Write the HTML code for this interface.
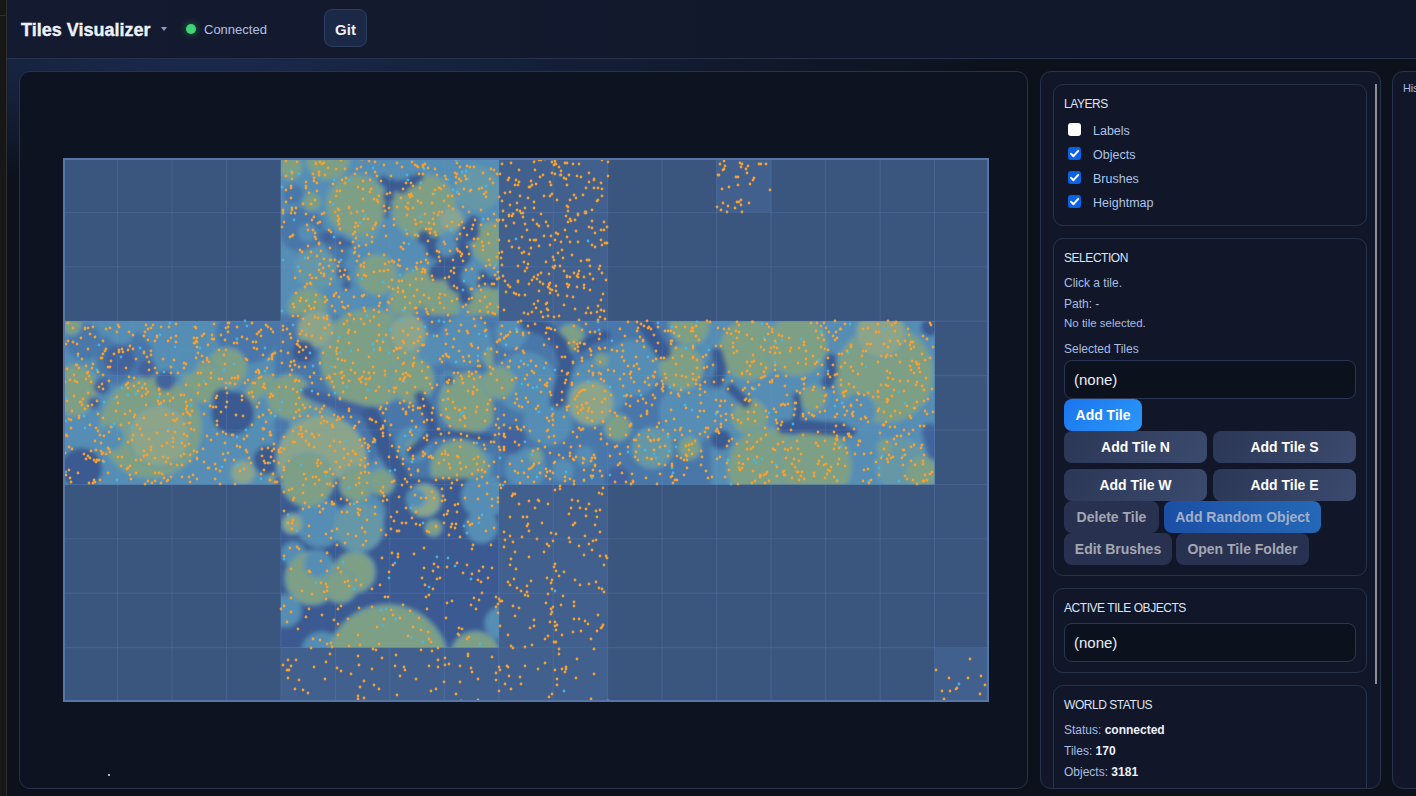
<!DOCTYPE html><html><head><meta charset="utf-8"><style>
*{box-sizing:border-box;margin:0;padding:0}
html,body{width:1416px;height:796px;overflow:hidden}
body{font-family:"Liberation Sans",sans-serif;background:#0c111c;position:relative}
.strip{position:absolute;left:0;top:0;width:7px;height:796px;background:#171717;border-right:1px solid #2e2e2e}
.strip:after{content:"";position:absolute;left:0;top:15px;width:6px;height:1px;background:#2e2e2e}
.bgglow{position:absolute;left:7px;top:0;width:1409px;height:796px;background:radial-gradient(ellipse 800px 120px at 200px 60px,#1a2a4c 0%,rgba(26,42,76,0) 100%)}
.header{position:absolute;left:7px;top:0;width:1409px;height:59px;background:linear-gradient(90deg,#141a2f,#11172a);border-bottom:1px solid #27314a}
.title{position:absolute;left:14px;top:20px;font-size:18px;font-weight:bold;color:#eef0fa;letter-spacing:0px;-webkit-text-stroke:0.35px #eef0fa}
.caret{position:absolute;left:154px;top:27px;width:0;height:0;border-left:3px solid transparent;border-right:3px solid transparent;border-top:4px solid #8d9ad0}
.dot{position:absolute;left:179px;top:24px;width:10px;height:10px;border-radius:50%;background:#3fd574;box-shadow:0 0 7px 1px rgba(63,213,116,.35)}
.conn{position:absolute;left:197px;top:21.5px;font-size:13px;color:#b4c0e4}
.git{position:absolute;left:317px;top:9px;width:43px;height:38px;border-radius:8px;background:#1b2846;border:1px solid #2d3d5f;color:#eef0fa;font-weight:bold;font-size:15px;text-align:center;line-height:39px}
.panel{position:absolute;border:1px solid #27324b;border-radius:11px}
.mapp{left:19px;top:71px;width:1009px;height:718px;background:#0d1321}
.rp{left:1040px;top:71px;width:341px;height:718px;background:#111728}
.hp{left:1392px;top:71px;width:60px;height:718px;background:#111728}
.card{position:absolute;left:1053px;width:314px;border:1px solid #27324b;border-radius:10px;background:#111728}
.h{position:absolute;left:10px;font-size:12px;color:#dde4f4;letter-spacing:-0.45px}
.t{position:absolute;left:10px;font-size:12px;color:#a9bde4}
.cb{position:absolute;left:14px;width:13px;height:13px;border-radius:3px;background:#0b62e4}
.cb.off{background:#fff}
.cbl{position:absolute;left:39px;font-size:12.5px;color:#aec3ea}
.inp{position:absolute;left:10px;width:292px;height:39px;border:1px solid #283554;border-radius:8px;background:#0c111e;color:#eaeef6;font-size:15px;padding-left:9px;line-height:37px}
.btn{position:absolute;height:32px;border-radius:8px;font-weight:bold;font-size:14px;color:#fff;text-align:center;line-height:33px}
.b1{background:linear-gradient(135deg,#1b74ee,#2b98f9)}
.b2{background:linear-gradient(120deg,#2c3756,#3b4a6e)}
.b3{background:#283250;color:#a3a6b2}
.b4{background:linear-gradient(90deg,#1b4fa6,#2468b6);color:#a1afc8}
.sb{position:absolute;left:1374.5px;top:84px;width:2px;height:600px;background:#8f8f8f}
</style></head><body><div class="strip"></div><div class="bgglow"></div><div class="header"><div class="title">Tiles Visualizer</div><div class="caret"></div><div class="dot"></div><div class="conn">Connected</div><div class="git">Git</div></div><div class="panel mapp"></div><svg width="926" height="544" viewBox="0 0 926 544" style="position:absolute;left:63px;top:158px;display:block"><defs><filter id="bl" x="-20%" y="-20%" width="140%" height="140%"><feGaussianBlur stdDeviation="2"/></filter><clipPath id="hc"><rect x="217.9" y="0.0" width="217.9" height="163.2" fill="#000"/><rect x="0.0" y="163.2" width="871.5" height="163.2" fill="#000"/><rect x="217.9" y="326.4" width="217.9" height="163.2" fill="#000"/></clipPath></defs><rect x="0" y="0" width="926" height="544" fill="#3b567e"/><rect x="435.8" y="0.0" width="108.9" height="163.2" fill="#41608e"/><rect x="653.6" y="0.0" width="54.5" height="54.4" fill="#41608e"/><rect x="435.8" y="326.4" width="108.9" height="163.2" fill="#41608e"/><rect x="217.9" y="489.6" width="326.8" height="54.4" fill="#41608e"/><rect x="871.5" y="489.6" width="54.5" height="54.4" fill="#41608e"/><rect x="217.9" y="0.0" width="217.9" height="163.2" fill="#5189b2"/><rect x="0.0" y="163.2" width="871.5" height="163.2" fill="#5189b2"/><rect x="217.9" y="326.4" width="217.9" height="163.2" fill="#5189b2"/><g clip-path="url(#hc)"><g filter="url(#bl)"><rect x="212.0" y="-6.0" width="229.9" height="175.2" fill="#548db4"/><circle cx="238.5" cy="71.6" r="22.5" fill="#4a77a9"/><circle cx="273.3" cy="96.2" r="12.3" fill="#4a77a9"/><circle cx="230.3" cy="36.8" r="10.2" fill="#4a77a9"/><circle cx="414.5" cy="30.7" r="22.5" fill="#6697a6" stroke="#5d97bb" stroke-opacity="0.55" stroke-width="2.5"/><circle cx="252.8" cy="110.5" r="20.5" fill="#6697a6" stroke="#5d97bb" stroke-opacity="0.55" stroke-width="2.5"/><circle cx="299.9" cy="69.6" r="16.4" fill="#6697a6" stroke="#5d97bb" stroke-opacity="0.55" stroke-width="2.5"/><circle cx="227.2" cy="9.2" r="12.3" fill="#7d9f86" stroke="#5d97bb" stroke-opacity="0.55" stroke-width="2.5"/><circle cx="265.1" cy="0.0" r="22.5" fill="#7d9f86" stroke="#5d97bb" stroke-opacity="0.55" stroke-width="2.5"/><circle cx="293.7" cy="47.1" r="30.7" fill="#7d9f86" stroke="#5d97bb" stroke-opacity="0.55" stroke-width="2.5"/><circle cx="248.7" cy="44.0" r="9.2" fill="#7d9f86" stroke="#5d97bb" stroke-opacity="0.55" stroke-width="2.5"/><circle cx="361.3" cy="49.1" r="32.8" fill="#7d9f86" stroke="#5d97bb" stroke-opacity="0.55" stroke-width="2.5"/><circle cx="430.9" cy="86.0" r="22.5" fill="#7d9f86" stroke="#5d97bb" stroke-opacity="0.55" stroke-width="2.5"/><circle cx="244.6" cy="149.4" r="19.4" fill="#7d9f86" stroke="#5d97bb" stroke-opacity="0.55" stroke-width="2.5"/><circle cx="314.2" cy="116.7" r="20.5" fill="#7d9f86" stroke="#5d97bb" stroke-opacity="0.55" stroke-width="2.5"/><circle cx="361.3" cy="145.3" r="35.8" fill="#7d9f86" stroke="#5d97bb" stroke-opacity="0.55" stroke-width="2.5"/><circle cx="424.8" cy="149.4" r="20.5" fill="#7d9f86" stroke="#5d97bb" stroke-opacity="0.55" stroke-width="2.5"/><circle cx="387.9" cy="61.4" r="12.3" fill="#8ca58a" stroke="#5d97bb" stroke-opacity="0.55" stroke-width="2.5"/><circle cx="320.4" cy="22.5" r="5.1" fill="#3b5a92"/><circle cx="328.5" cy="27.6" r="7.2" fill="#3b5a92"/><circle cx="338.8" cy="28.7" r="7.2" fill="#3b5a92"/><circle cx="349.0" cy="23.5" r="6.1" fill="#3b5a92"/><circle cx="356.2" cy="19.4" r="4.1" fill="#3b5a92"/><circle cx="325.5" cy="38.9" r="5.7" fill="#3b5a92"/><circle cx="324.4" cy="49.1" r="4.5" fill="#3b5a92"/><circle cx="323.4" cy="57.3" r="2.9" fill="#3b5a92"/><circle cx="361.3" cy="79.8" r="7.2" fill="#3b5a92"/><circle cx="373.6" cy="90.1" r="11.3" fill="#3b5a92"/><circle cx="392.0" cy="96.2" r="16.4" fill="#3b5a92"/><circle cx="406.3" cy="73.7" r="10.2" fill="#3b5a92"/><circle cx="410.4" cy="63.5" r="6.1" fill="#3b5a92"/><circle cx="396.1" cy="122.8" r="12.3" fill="#3b5a92"/><circle cx="402.2" cy="139.2" r="7.2" fill="#3b5a92"/><circle cx="418.6" cy="120.8" r="8.2" fill="#3b5a92"/><circle cx="430.9" cy="124.9" r="6.1" fill="#3b5a92"/><circle cx="373.6" cy="114.6" r="8.2" fill="#3b5a92"/><circle cx="383.8" cy="110.5" r="12.3" fill="#3b5a92"/><circle cx="265.1" cy="79.8" r="7.2" fill="#42649c"/><circle cx="277.4" cy="83.9" r="6.1" fill="#42649c"/><circle cx="285.6" cy="86.0" r="4.1" fill="#42649c"/><circle cx="279.4" cy="114.6" r="6.1" fill="#42649c"/><circle cx="283.5" cy="126.9" r="5.1" fill="#42649c"/><circle cx="359.2" cy="157.6" r="8.2" fill="#3b5a92"/><circle cx="383.8" cy="88.0" r="9.8" fill="#548db4" stroke="#5d97bb" stroke-opacity="0.55" stroke-width="2.5"/><circle cx="407.4" cy="118.7" r="8.6" fill="#548db4" stroke="#5d97bb" stroke-opacity="0.55" stroke-width="2.5"/><circle cx="359.2" cy="157.6" r="6.6" fill="#548db4" stroke="#5d97bb" stroke-opacity="0.55" stroke-width="2.5"/><circle cx="244.6" cy="74.7" r="8.2" fill="#548db4" stroke="#5d97bb" stroke-opacity="0.55" stroke-width="2.5"/><rect x="-6.0" y="157.0" width="229.9" height="175.2" fill="#548db4"/><circle cx="20.5" cy="183.5" r="18.4" fill="#4a77a9"/><circle cx="61.4" cy="199.8" r="28.7" fill="#4a77a9"/><circle cx="184.2" cy="175.3" r="30.7" fill="#4a77a9"/><circle cx="124.9" cy="183.5" r="22.5" fill="#548db4"/><circle cx="10.2" cy="277.6" r="14.3" fill="#548db4"/><circle cx="143.3" cy="306.3" r="20.5" fill="#548db4"/><circle cx="8.2" cy="167.1" r="10.2" fill="#7d9f86" stroke="#5d97bb" stroke-opacity="0.55" stroke-width="2.5"/><circle cx="10.2" cy="232.6" r="25.6" fill="#7d9f86" stroke="#5d97bb" stroke-opacity="0.55" stroke-width="2.5"/><circle cx="163.8" cy="210.1" r="20.5" fill="#7d9f86" stroke="#5d97bb" stroke-opacity="0.55" stroke-width="2.5"/><circle cx="139.2" cy="224.4" r="20.5" fill="#7d9f86" stroke="#5d97bb" stroke-opacity="0.55" stroke-width="2.5"/><circle cx="88.0" cy="269.4" r="51.2" fill="#7d9f86" stroke="#5d97bb" stroke-opacity="0.55" stroke-width="2.5"/><circle cx="204.7" cy="238.7" r="22.5" fill="#7d9f86" stroke="#5d97bb" stroke-opacity="0.55" stroke-width="2.5"/><circle cx="214.9" cy="318.6" r="10.2" fill="#7d9f86" stroke="#5d97bb" stroke-opacity="0.55" stroke-width="2.5"/><circle cx="96.2" cy="277.6" r="30.7" fill="#8ca58a" stroke="#5d97bb" stroke-opacity="0.55" stroke-width="2.5"/><circle cx="180.1" cy="314.5" r="12.3" fill="#8ca58a" stroke="#5d97bb" stroke-opacity="0.55" stroke-width="2.5"/><circle cx="56.7" cy="202.1" r="15.4" fill="#42649c"/><circle cx="38.9" cy="228.5" r="8.2" fill="#42649c"/><circle cx="30.7" cy="244.9" r="6.1" fill="#42649c"/><circle cx="83.9" cy="211.1" r="9.2" fill="#42649c"/><circle cx="102.4" cy="222.4" r="10.2" fill="#42649c"/><circle cx="169.9" cy="255.1" r="21.5" fill="#3b5a92"/><circle cx="159.7" cy="240.8" r="10.2" fill="#3b5a92"/><circle cx="18.4" cy="310.4" r="20.5" fill="#3b5a92"/><circle cx="204.7" cy="302.2" r="14.3" fill="#3b5a92"/><circle cx="57.7" cy="172.2" r="13.3" fill="#548db4" stroke="#5d97bb" stroke-opacity="0.55" stroke-width="2.5"/><circle cx="122.8" cy="203.9" r="12.3" fill="#548db4" stroke="#5d97bb" stroke-opacity="0.55" stroke-width="2.5"/><circle cx="202.7" cy="249.0" r="11.3" fill="#548db4" stroke="#5d97bb" stroke-opacity="0.55" stroke-width="2.5"/><circle cx="48.1" cy="279.7" r="12.7" fill="#548db4" stroke="#5d97bb" stroke-opacity="0.55" stroke-width="2.5"/><rect x="212.0" y="157.0" width="229.9" height="175.2" fill="#4a77a9"/><circle cx="238.5" cy="208.0" r="16.4" fill="#4a77a9"/><circle cx="369.5" cy="191.7" r="16.4" fill="#548db4"/><circle cx="402.2" cy="183.5" r="26.6" fill="#548db4"/><circle cx="385.9" cy="222.4" r="9.2" fill="#548db4"/><circle cx="279.4" cy="298.1" r="8.2" fill="#548db4"/><circle cx="318.3" cy="314.5" r="14.3" fill="#548db4"/><circle cx="351.1" cy="285.8" r="18.4" fill="#548db4"/><circle cx="420.7" cy="306.3" r="12.3" fill="#548db4"/><circle cx="248.7" cy="261.3" r="22.5" fill="#6697a6" stroke="#5d97bb" stroke-opacity="0.55" stroke-width="2.5"/><circle cx="306.0" cy="199.8" r="49.1" fill="#7d9f86" stroke="#5d97bb" stroke-opacity="0.55" stroke-width="2.5"/><circle cx="349.0" cy="222.4" r="22.5" fill="#7d9f86" stroke="#5d97bb" stroke-opacity="0.55" stroke-width="2.5"/><circle cx="226.2" cy="238.7" r="22.5" fill="#7d9f86" stroke="#5d97bb" stroke-opacity="0.55" stroke-width="2.5"/><circle cx="406.3" cy="244.9" r="30.7" fill="#7d9f86" stroke="#5d97bb" stroke-opacity="0.55" stroke-width="2.5"/><circle cx="432.9" cy="199.8" r="12.3" fill="#7d9f86" stroke="#5d97bb" stroke-opacity="0.55" stroke-width="2.5"/><circle cx="351.1" cy="289.9" r="8.2" fill="#7d9f86" stroke="#5d97bb" stroke-opacity="0.55" stroke-width="2.5"/><circle cx="396.1" cy="310.4" r="28.7" fill="#7d9f86" stroke="#5d97bb" stroke-opacity="0.55" stroke-width="2.5"/><circle cx="344.9" cy="175.3" r="18.4" fill="#8ca58a" stroke="#5d97bb" stroke-opacity="0.55" stroke-width="2.5"/><circle cx="252.8" cy="171.2" r="18.4" fill="#8ca58a" stroke="#5d97bb" stroke-opacity="0.55" stroke-width="2.5"/><circle cx="258.9" cy="302.2" r="45.0" fill="#8ca58a" stroke="#5d97bb" stroke-opacity="0.55" stroke-width="2.5"/><circle cx="240.5" cy="193.7" r="11.3" fill="#3b5a92"/><circle cx="385.9" cy="222.4" r="4.5" fill="#3b5a92"/><circle cx="244.6" cy="234.6" r="6.1" fill="#42649c"/><circle cx="248.7" cy="236.4" r="6.1" fill="#42649c"/><circle cx="252.8" cy="238.1" r="6.1" fill="#42649c"/><circle cx="256.9" cy="239.8" r="6.1" fill="#42649c"/><circle cx="261.0" cy="241.5" r="6.1" fill="#42649c"/><circle cx="265.1" cy="243.2" r="6.1" fill="#42649c"/><circle cx="269.2" cy="244.9" r="6.1" fill="#42649c"/><circle cx="273.6" cy="246.1" r="6.1" fill="#42649c"/><circle cx="278.0" cy="247.2" r="6.1" fill="#42649c"/><circle cx="282.3" cy="248.4" r="6.1" fill="#42649c"/><circle cx="286.7" cy="249.6" r="6.1" fill="#42649c"/><circle cx="291.1" cy="250.7" r="6.1" fill="#42649c"/><circle cx="295.5" cy="251.9" r="6.1" fill="#42649c"/><circle cx="299.9" cy="253.1" r="6.1" fill="#42649c"/><circle cx="308.1" cy="257.2" r="9.2" fill="#3b5a92"/><circle cx="312.2" cy="265.4" r="9.2" fill="#3b5a92"/><circle cx="316.3" cy="273.5" r="9.2" fill="#3b5a92"/><circle cx="319.3" cy="281.7" r="9.2" fill="#3b5a92"/><circle cx="322.4" cy="289.9" r="9.2" fill="#3b5a92"/><circle cx="326.5" cy="298.1" r="9.2" fill="#3b5a92"/><circle cx="330.6" cy="306.3" r="9.2" fill="#3b5a92"/><circle cx="334.0" cy="313.1" r="9.2" fill="#3b5a92"/><circle cx="337.4" cy="319.9" r="9.2" fill="#3b5a92"/><circle cx="340.8" cy="326.8" r="9.2" fill="#3b5a92"/><circle cx="357.0" cy="238.9" r="5.7" fill="#3b5a92"/><circle cx="359.3" cy="242.9" r="5.7" fill="#3b5a92"/><circle cx="361.6" cy="246.8" r="5.7" fill="#3b5a92"/><circle cx="363.9" cy="250.8" r="5.7" fill="#3b5a92"/><circle cx="366.2" cy="254.7" r="5.7" fill="#3b5a92"/><circle cx="367.2" cy="258.9" r="5.7" fill="#3b5a92"/><circle cx="368.2" cy="263.1" r="5.7" fill="#3b5a92"/><circle cx="369.1" cy="267.3" r="5.7" fill="#3b5a92"/><circle cx="370.1" cy="271.5" r="5.7" fill="#3b5a92"/><circle cx="367.2" cy="275.6" r="5.7" fill="#3b5a92"/><circle cx="364.2" cy="279.7" r="5.7" fill="#3b5a92"/><circle cx="361.3" cy="283.8" r="5.7" fill="#3b5a92"/><circle cx="357.2" cy="287.2" r="5.7" fill="#3b5a92"/><circle cx="353.1" cy="290.6" r="5.7" fill="#3b5a92"/><circle cx="349.0" cy="294.0" r="5.7" fill="#3b5a92"/><circle cx="373.6" cy="275.2" r="4.1" fill="#3b5a92"/><circle cx="376.6" cy="275.3" r="4.1" fill="#3b5a92"/><circle cx="379.7" cy="275.5" r="4.1" fill="#3b5a92"/><circle cx="382.8" cy="275.6" r="4.1" fill="#3b5a92"/><circle cx="385.9" cy="275.7" r="4.1" fill="#3b5a92"/><circle cx="388.9" cy="275.9" r="4.1" fill="#3b5a92"/><circle cx="392.0" cy="276.0" r="4.1" fill="#3b5a92"/><circle cx="394.9" cy="276.3" r="4.1" fill="#3b5a92"/><circle cx="397.9" cy="276.6" r="4.1" fill="#3b5a92"/><circle cx="400.8" cy="276.9" r="4.1" fill="#3b5a92"/><circle cx="403.7" cy="277.2" r="4.1" fill="#3b5a92"/><circle cx="406.6" cy="277.5" r="4.1" fill="#3b5a92"/><circle cx="409.5" cy="277.8" r="4.1" fill="#3b5a92"/><circle cx="412.5" cy="278.0" r="4.1" fill="#3b5a92"/><circle cx="415.5" cy="278.5" r="4.1" fill="#3b5a92"/><circle cx="418.6" cy="278.9" r="4.1" fill="#3b5a92"/><circle cx="421.7" cy="279.3" r="4.1" fill="#3b5a92"/><circle cx="424.8" cy="279.7" r="4.1" fill="#3b5a92"/><circle cx="427.8" cy="280.1" r="4.1" fill="#3b5a92"/><circle cx="430.9" cy="280.5" r="4.1" fill="#3b5a92"/><circle cx="434.0" cy="280.9" r="4.1" fill="#3b5a92"/><circle cx="437.0" cy="281.3" r="4.1" fill="#3b5a92"/><rect x="430.0" y="157.0" width="229.9" height="175.2" fill="#4a77a9"/><circle cx="550.6" cy="294.0" r="14.3" fill="#4a77a9"/><circle cx="630.5" cy="314.5" r="20.5" fill="#4a77a9"/><circle cx="448.3" cy="175.3" r="16.4" fill="#548db4"/><circle cx="462.6" cy="224.4" r="30.7" fill="#548db4"/><circle cx="534.3" cy="230.6" r="30.7" fill="#548db4"/><circle cx="569.1" cy="210.1" r="28.7" fill="#548db4"/><circle cx="640.7" cy="189.6" r="18.4" fill="#548db4"/><circle cx="626.4" cy="255.1" r="30.7" fill="#548db4"/><circle cx="485.1" cy="263.3" r="24.6" fill="#548db4"/><circle cx="462.6" cy="310.4" r="20.5" fill="#548db4"/><circle cx="499.5" cy="312.4" r="11.3" fill="#548db4"/><circle cx="522.0" cy="298.1" r="10.2" fill="#548db4"/><circle cx="589.5" cy="289.9" r="20.5" fill="#6697a6" stroke="#5d97bb" stroke-opacity="0.55" stroke-width="2.5"/><circle cx="436.0" cy="224.4" r="16.4" fill="#7d9f86" stroke="#5d97bb" stroke-opacity="0.55" stroke-width="2.5"/><circle cx="507.6" cy="179.4" r="13.3" fill="#7d9f86" stroke="#5d97bb" stroke-opacity="0.55" stroke-width="2.5"/><circle cx="538.4" cy="201.9" r="7.2" fill="#7d9f86" stroke="#5d97bb" stroke-opacity="0.55" stroke-width="2.5"/><circle cx="618.2" cy="210.1" r="22.5" fill="#7d9f86" stroke="#5d97bb" stroke-opacity="0.55" stroke-width="2.5"/><circle cx="626.4" cy="167.1" r="20.5" fill="#7d9f86" stroke="#5d97bb" stroke-opacity="0.55" stroke-width="2.5"/><circle cx="554.7" cy="269.4" r="13.3" fill="#7d9f86" stroke="#5d97bb" stroke-opacity="0.55" stroke-width="2.5"/><circle cx="626.4" cy="289.9" r="11.3" fill="#7d9f86" stroke="#5d97bb" stroke-opacity="0.55" stroke-width="2.5"/><circle cx="472.8" cy="298.1" r="7.2" fill="#7d9f86" stroke="#5d97bb" stroke-opacity="0.55" stroke-width="2.5"/><circle cx="528.1" cy="244.9" r="22.5" fill="#8ca58a" stroke="#5d97bb" stroke-opacity="0.55" stroke-width="2.5"/><circle cx="654.0" cy="206.0" r="8.2" fill="#3b5a92"/><circle cx="464.7" cy="165.0" r="7.8" fill="#3b5a92"/><circle cx="470.8" cy="167.1" r="7.8" fill="#3b5a92"/><circle cx="476.9" cy="169.1" r="7.8" fill="#3b5a92"/><circle cx="483.1" cy="171.2" r="7.8" fill="#3b5a92"/><circle cx="487.9" cy="176.0" r="7.8" fill="#3b5a92"/><circle cx="492.6" cy="180.7" r="7.8" fill="#3b5a92"/><circle cx="497.4" cy="185.5" r="7.8" fill="#3b5a92"/><circle cx="499.5" cy="191.7" r="7.8" fill="#3b5a92"/><circle cx="501.5" cy="197.8" r="7.8" fill="#3b5a92"/><circle cx="503.6" cy="203.9" r="7.8" fill="#3b5a92"/><circle cx="502.2" cy="210.8" r="7.8" fill="#3b5a92"/><circle cx="500.8" cy="217.6" r="7.8" fill="#3b5a92"/><circle cx="499.5" cy="224.4" r="7.8" fill="#3b5a92"/><circle cx="497.8" cy="230.6" r="7.8" fill="#3b5a92"/><circle cx="496.0" cy="236.7" r="7.8" fill="#3b5a92"/><circle cx="494.3" cy="242.8" r="7.8" fill="#3b5a92"/><circle cx="517.9" cy="189.6" r="5.1" fill="#3b5a92"/><circle cx="521.3" cy="186.9" r="5.1" fill="#3b5a92"/><circle cx="524.7" cy="184.2" r="5.1" fill="#3b5a92"/><circle cx="528.1" cy="181.4" r="5.1" fill="#3b5a92"/><circle cx="531.7" cy="180.4" r="5.1" fill="#3b5a92"/><circle cx="535.3" cy="179.4" r="5.1" fill="#3b5a92"/><circle cx="538.9" cy="178.4" r="5.1" fill="#3b5a92"/><circle cx="542.4" cy="177.3" r="5.1" fill="#3b5a92"/><circle cx="583.4" cy="167.1" r="8.2" fill="#3b5a92"/><circle cx="587.5" cy="174.3" r="8.2" fill="#3b5a92"/><circle cx="591.6" cy="181.4" r="8.2" fill="#3b5a92"/><circle cx="595.7" cy="187.6" r="8.2" fill="#3b5a92"/><circle cx="599.8" cy="193.7" r="8.2" fill="#3b5a92"/><circle cx="448.3" cy="281.7" r="14.3" fill="#42649c"/><circle cx="554.7" cy="320.6" r="12.3" fill="#42649c"/><rect x="648.0" y="157.0" width="229.9" height="175.2" fill="#548db4"/><circle cx="813.7" cy="310.4" r="30.7" fill="#548db4"/><circle cx="834.1" cy="312.4" r="14.3" fill="#548db4"/><circle cx="838.2" cy="306.3" r="26.6" fill="#6697a6" stroke="#5d97bb" stroke-opacity="0.55" stroke-width="2.5"/><circle cx="686.8" cy="191.7" r="30.7" fill="#7d9f86" stroke="#5d97bb" stroke-opacity="0.55" stroke-width="2.5"/><circle cx="733.8" cy="187.6" r="30.7" fill="#7d9f86" stroke="#5d97bb" stroke-opacity="0.55" stroke-width="2.5"/><circle cx="686.8" cy="259.2" r="18.4" fill="#7d9f86" stroke="#5d97bb" stroke-opacity="0.55" stroke-width="2.5"/><circle cx="750.2" cy="240.8" r="13.3" fill="#7d9f86" stroke="#5d97bb" stroke-opacity="0.55" stroke-width="2.5"/><circle cx="821.9" cy="216.2" r="49.1" fill="#7d9f86" stroke="#5d97bb" stroke-opacity="0.55" stroke-width="2.5"/><circle cx="705.2" cy="310.4" r="40.9" fill="#7d9f86" stroke="#5d97bb" stroke-opacity="0.55" stroke-width="2.5"/><circle cx="752.3" cy="308.3" r="36.8" fill="#7d9f86" stroke="#5d97bb" stroke-opacity="0.55" stroke-width="2.5"/><circle cx="821.9" cy="288.9" r="8.2" fill="#7d9f86" stroke="#5d97bb" stroke-opacity="0.55" stroke-width="2.5"/><circle cx="858.7" cy="314.5" r="16.4" fill="#7d9f86" stroke="#5d97bb" stroke-opacity="0.55" stroke-width="2.5"/><circle cx="817.8" cy="175.3" r="24.6" fill="#8ca58a" stroke="#5d97bb" stroke-opacity="0.55" stroke-width="2.5"/><circle cx="654.0" cy="195.8" r="6.1" fill="#3b5a92"/><circle cx="655.4" cy="200.5" r="6.1" fill="#3b5a92"/><circle cx="656.7" cy="205.3" r="6.1" fill="#3b5a92"/><circle cx="658.1" cy="210.1" r="6.1" fill="#3b5a92"/><circle cx="656.7" cy="214.9" r="6.1" fill="#3b5a92"/><circle cx="655.4" cy="219.6" r="6.1" fill="#3b5a92"/><circle cx="654.0" cy="224.4" r="6.1" fill="#3b5a92"/><circle cx="668.3" cy="230.6" r="5.1" fill="#3b5a92"/><circle cx="671.1" cy="233.3" r="5.1" fill="#3b5a92"/><circle cx="673.8" cy="236.0" r="5.1" fill="#3b5a92"/><circle cx="676.5" cy="238.7" r="5.1" fill="#3b5a92"/><circle cx="679.6" cy="241.8" r="5.1" fill="#3b5a92"/><circle cx="682.7" cy="244.9" r="5.1" fill="#3b5a92"/><circle cx="767.6" cy="201.9" r="6.1" fill="#3b5a92"/><circle cx="768.1" cy="208.0" r="6.1" fill="#3b5a92"/><circle cx="768.6" cy="214.2" r="6.1" fill="#3b5a92"/><circle cx="766.6" cy="219.3" r="6.1" fill="#3b5a92"/><circle cx="764.5" cy="224.4" r="6.1" fill="#3b5a92"/><circle cx="733.8" cy="238.7" r="3.7" fill="#3b5a92"/><circle cx="734.2" cy="241.6" r="3.7" fill="#3b5a92"/><circle cx="734.7" cy="244.5" r="3.7" fill="#3b5a92"/><circle cx="735.1" cy="247.3" r="3.7" fill="#3b5a92"/><circle cx="735.5" cy="250.2" r="3.7" fill="#3b5a92"/><circle cx="735.9" cy="253.1" r="3.7" fill="#3b5a92"/><circle cx="735.1" cy="255.5" r="3.7" fill="#3b5a92"/><circle cx="734.2" cy="258.0" r="3.7" fill="#3b5a92"/><circle cx="733.4" cy="260.4" r="3.7" fill="#3b5a92"/><circle cx="732.6" cy="262.9" r="3.7" fill="#3b5a92"/><circle cx="731.8" cy="265.4" r="3.7" fill="#3b5a92"/><circle cx="721.6" cy="269.4" r="7.2" fill="#3b5a92"/><circle cx="726.7" cy="269.2" r="7.2" fill="#3b5a92"/><circle cx="731.8" cy="268.9" r="7.2" fill="#3b5a92"/><circle cx="736.9" cy="268.7" r="7.2" fill="#3b5a92"/><circle cx="742.0" cy="268.4" r="7.2" fill="#3b5a92"/><circle cx="747.7" cy="268.9" r="7.2" fill="#3b5a92"/><circle cx="753.3" cy="269.4" r="7.2" fill="#3b5a92"/><circle cx="758.9" cy="270.0" r="7.2" fill="#3b5a92"/><circle cx="764.5" cy="270.5" r="7.2" fill="#3b5a92"/><circle cx="770.2" cy="270.7" r="7.2" fill="#3b5a92"/><circle cx="775.8" cy="271.0" r="7.2" fill="#3b5a92"/><circle cx="781.4" cy="271.2" r="7.2" fill="#3b5a92"/><circle cx="787.1" cy="271.5" r="7.2" fill="#3b5a92"/><circle cx="658.1" cy="281.7" r="10.2" fill="#3b5a92"/><circle cx="866.9" cy="169.1" r="9.2" fill="#3b5a92"/><circle cx="866.9" cy="273.5" r="8.2" fill="#42649c"/><circle cx="868.6" cy="280.4" r="8.2" fill="#42649c"/><circle cx="870.3" cy="287.2" r="8.2" fill="#42649c"/><circle cx="872.0" cy="294.0" r="8.2" fill="#42649c"/><circle cx="795.2" cy="253.1" r="17.4" fill="#548db4" stroke="#5d97bb" stroke-opacity="0.55" stroke-width="2.5"/><rect x="212.0" y="320.0" width="229.9" height="175.2" fill="#3b5a92"/><circle cx="256.9" cy="364.9" r="24.6" fill="#548db4"/><circle cx="304.0" cy="354.7" r="18.4" fill="#548db4"/><circle cx="420.7" cy="338.3" r="22.5" fill="#548db4"/><circle cx="418.6" cy="369.0" r="16.4" fill="#548db4"/><circle cx="230.3" cy="395.6" r="12.3" fill="#548db4"/><circle cx="222.1" cy="452.9" r="16.4" fill="#548db4"/><circle cx="258.9" cy="493.9" r="20.5" fill="#548db4"/><circle cx="438.1" cy="465.2" r="16.4" fill="#548db4"/><circle cx="295.8" cy="369.0" r="24.6" fill="#6697a6" stroke="#5d97bb" stroke-opacity="0.55" stroke-width="2.5"/><circle cx="244.6" cy="321.9" r="26.6" fill="#7d9f86" stroke="#5d97bb" stroke-opacity="0.55" stroke-width="2.5"/><circle cx="293.7" cy="326.0" r="17.4" fill="#7d9f86" stroke="#5d97bb" stroke-opacity="0.55" stroke-width="2.5"/><circle cx="318.3" cy="324.0" r="13.3" fill="#7d9f86" stroke="#5d97bb" stroke-opacity="0.55" stroke-width="2.5"/><circle cx="370.5" cy="370.0" r="8.2" fill="#7d9f86" stroke="#5d97bb" stroke-opacity="0.55" stroke-width="2.5"/><circle cx="248.7" cy="420.2" r="26.6" fill="#7d9f86" stroke="#5d97bb" stroke-opacity="0.55" stroke-width="2.5"/><circle cx="291.7" cy="414.0" r="20.5" fill="#7d9f86" stroke="#5d97bb" stroke-opacity="0.55" stroke-width="2.5"/><circle cx="277.4" cy="428.4" r="16.4" fill="#7d9f86" stroke="#5d97bb" stroke-opacity="0.55" stroke-width="2.5"/><circle cx="324.4" cy="508.2" r="61.4" fill="#7d9f86" stroke="#5d97bb" stroke-opacity="0.55" stroke-width="2.5"/><circle cx="412.5" cy="498.0" r="24.6" fill="#7d9f86" stroke="#5d97bb" stroke-opacity="0.55" stroke-width="2.5"/><circle cx="229.3" cy="365.9" r="10.2" fill="#8ca58a" stroke="#5d97bb" stroke-opacity="0.55" stroke-width="2.5"/><circle cx="361.3" cy="342.4" r="16.4" fill="#8ca58a" stroke="#5d97bb" stroke-opacity="0.55" stroke-width="2.5"/><circle cx="353.1" cy="340.3" r="9.2" fill="#548db4" stroke="#5d97bb" stroke-opacity="0.55" stroke-width="2.5"/><circle cx="254.8" cy="405.8" r="13.3" fill="#548db4" stroke="#5d97bb" stroke-opacity="0.55" stroke-width="2.5"/></g></g><path d="M219 29h0M228 13h0M270 46h0M271 22h0M236 16h0M256 107h0M235 109h0M242 100h0M271 79h0M220 102h0M231 62h0M261 158h0M219 153h0M245 142h0M310 10h0M286 22h0M297 65h0M302 58h0M278 102h0M320 124h0M304 158h0M299 121h0M344 17h0M372 36h0M358 25h0M345 22h0M361 11h0M357 59h0M354 76h0M343 72h0M346 86h0M340 152h0M376 163h0M337 117h0M341 152h0M339 162h0M350 113h0M423 28h0M403 13h0M390 32h0M393 2h0M394 34h0M405 21h0M385 22h0M399 14h0M388 58h0M432 108h0M420 61h0M388 72h0M388 72h0M401 123h0M400 132h0M15 198h0M34 212h0M36 187h0M49 269h0M21 258h0M51 266h0M52 240h0M3 240h0M3 263h0M41 244h0M22 270h0M3 314h0M41 304h0M54 322h0M97 177h0M58 199h0M77 190h0M101 214h0M107 165h0M73 236h0M98 247h0M69 269h0M65 237h0M59 230h0M106 271h0M96 239h0M80 228h0M137 190h0M161 212h0M112 189h0M128 259h0M128 247h0M141 223h0M110 288h0M117 283h0M159 309h0M202 190h0M205 202h0M184 168h0M174 181h0M202 213h0M171 206h0M182 163h0M217 252h0M200 270h0M165 226h0M183 272h0M212 258h0M175 307h0M198 321h0M179 312h0M174 279h0M207 305h0M247 195h0M269 209h0M257 206h0M250 208h0M230 167h0M249 233h0M238 232h0M219 244h0M263 264h0M272 235h0M263 318h0M238 307h0M277 195h0M311 192h0M274 201h0M326 195h0M276 179h0M320 182h0M288 193h0M310 186h0M305 232h0M284 229h0M312 284h0M283 283h0M306 293h0M381 164h0M371 178h0M328 172h0M355 173h0M362 169h0M341 224h0M349 304h0M327 313h0M364 277h0M342 278h0M332 312h0M348 272h0M425 191h0M415 198h0M416 176h0M393 204h0M423 178h0M382 242h0M400 254h0M391 225h0M398 256h0M414 285h0M453 171h0M465 207h0M454 172h0M443 187h0M458 203h0M481 210h0M470 230h0M489 251h0M476 254h0M474 229h0M459 226h0M469 297h0M437 300h0M462 284h0M474 319h0M536 172h0M492 212h0M522 186h0M535 164h0M520 271h0M525 224h0M503 314h0M521 323h0M529 320h0M549 183h0M595 165h0M585 199h0M561 238h0M547 229h0M578 237h0M565 294h0M582 292h0M547 317h0M593 300h0M591 296h0M623 190h0M609 169h0M646 192h0M634 164h0M614 178h0M622 247h0M618 230h0M653 256h0M629 252h0M607 229h0M610 315h0M609 310h0M605 279h0M613 289h0M606 293h0M699 166h0M701 180h0M692 231h0M706 255h0M655 254h0M665 302h0M691 302h0M699 301h0M668 326h0M693 305h0M756 202h0M712 204h0M758 174h0M738 181h0M719 182h0M713 185h0M730 266h0M713 318h0M713 307h0M787 166h0M765 213h0M785 195h0M803 209h0M779 245h0M772 248h0M806 323h0M816 310h0M775 322h0M778 289h0M822 171h0M836 234h0M842 245h0M836 323h0M819 298h0M840 298h0M860 307h0M234 373h0M225 357h0M291 346h0M286 330h0M360 365h0M348 350h0M419 357h0M404 375h0M401 368h0M416 365h0M221 401h0M253 425h0M291 431h0M326 420h0M280 404h0M318 452h0M323 451h0M320 467h0M332 405h0M366 429h0M374 399h0M348 479h0M333 461h0M360 484h0M385 400h0M392 408h0M408 421h0M417 486h0M453 81h0M497 17h0M525 83h0M440 327h0M492 433h0M501 533h0M896 526h0" stroke="#48b8e6" stroke-width="2.8" stroke-linecap="round" stroke-opacity="0.9"/><path d="M243 30h0M243 28h0M228 28h0M261 5h0M223 44h0M220 53h0M254 33h0M243 24h0M246 35h0M254 25h0M272 54h0M256 17h0M234 4h0M240 46h0M229 50h0M252 42h0M223 18h0M259 6h0M223 3h0M228 30h0M228 40h0M253 6h0M229 15h0M262 17h0M229 21h0M253 5h0M229 14h0M223 32h0M251 20h0M270 26h0M265 10h0M267 44h0M228 40h0M229 52h0M251 23h0M220 52h0M256 14h0M250 16h0M257 4h0M248 46h0M233 50h0M219 69h0M221 64h0M249 62h0M266 108h0M256 86h0M220 55h0M253 81h0M248 94h0M258 93h0M268 74h0M267 102h0M261 101h0M252 75h0M251 59h0M272 102h0M239 94h0M259 56h0M244 67h0M245 88h0M232 55h0M255 65h0M267 90h0M266 72h0M229 78h0M268 102h0M250 72h0M245 100h0M257 106h0M227 79h0M230 77h0M245 72h0M256 85h0M261 55h0M243 56h0M252 79h0M254 98h0M255 65h0M228 55h0M257 64h0M237 92h0M251 150h0M269 148h0M243 143h0M238 140h0M261 160h0M253 120h0M262 144h0M230 158h0M271 138h0M235 158h0M237 113h0M248 151h0M261 118h0M261 116h0M246 148h0M255 160h0M270 113h0M247 125h0M253 137h0M248 126h0M264 158h0M264 161h0M249 120h0M271 137h0M262 139h0M256 112h0M240 161h0M233 135h0M242 153h0M244 126h0M252 159h0M260 110h0M230 146h0M237 143h0M258 115h0M232 120h0M242 129h0M247 117h0M252 144h0M264 142h0M231 149h0M267 126h0M268 121h0M321 7h0M312 14h0M318 23h0M279 22h0M273 11h0M322 53h0M300 41h0M278 2h0M300 31h0M282 11h0M326 50h0M276 52h0M314 18h0M300 23h0M273 38h0M282 25h0M294 11h0M300 1h0M316 38h0M307 22h0M300 53h0M286 50h0M315 44h0M321 48h0M314 42h0M312 4h0M298 1h0M307 34h0M324 36h0M308 31h0M294 54h0M311 41h0M274 33h0M283 20h0M286 49h0M300 53h0M327 35h0M277 33h0M275 51h0M298 9h0M306 3h0M295 29h0M292 16h0M303 15h0M288 55h0M275 63h0M294 103h0M275 108h0M276 104h0M298 107h0M301 105h0M298 108h0M305 61h0M301 61h0M309 79h0M304 77h0M301 109h0M312 67h0M321 97h0M292 69h0M303 87h0M313 65h0M326 104h0M275 58h0M296 88h0M309 84h0M293 80h0M291 95h0M276 61h0M306 96h0M295 68h0M292 90h0M290 84h0M323 78h0M277 85h0M310 71h0M276 66h0M277 71h0M310 70h0M292 94h0M279 93h0M322 106h0M296 98h0M290 76h0M321 68h0M292 74h0M293 65h0M316 138h0M303 118h0M300 138h0M325 144h0M276 139h0M277 113h0M321 113h0M280 149h0M286 121h0M301 150h0M291 161h0M299 138h0M311 159h0M317 145h0M316 154h0M325 144h0M311 152h0M295 117h0M326 129h0M283 132h0M325 112h0M279 144h0M282 112h0M278 119h0M285 148h0M285 119h0M282 150h0M302 153h0M287 157h0M291 139h0M324 152h0M301 137h0M326 145h0M273 135h0M316 148h0M281 117h0M286 156h0M307 163h0M301 117h0M272 153h0M317 113h0M311 114h0M298 161h0M374 17h0M350 50h0M372 11h0M355 9h0M343 25h0M346 37h0M348 25h0M347 39h0M381 43h0M360 16h0M356 16h0M348 36h0M338 40h0M378 31h0M345 45h0M334 5h0M365 10h0M372 32h0M339 9h0M349 4h0M350 28h0M369 45h0M349 38h0M370 36h0M328 18h0M362 6h0M355 43h0M360 9h0M376 30h0M354 8h0M381 28h0M372 11h0M340 31h0M345 51h0M352 7h0M334 49h0M357 30h0M376 54h0M360 7h0M343 49h0M358 45h0M337 108h0M363 71h0M367 75h0M371 55h0M352 62h0M358 64h0M341 85h0M362 56h0M335 107h0M352 77h0M364 96h0M353 109h0M373 77h0M358 104h0M355 78h0M344 57h0M376 94h0M368 71h0M331 61h0M365 83h0M344 76h0M331 104h0M363 102h0M371 66h0M358 104h0M370 61h0M379 54h0M376 99h0M329 103h0M354 105h0M353 66h0M377 103h0M372 74h0M336 102h0M338 89h0M375 57h0M366 71h0M374 93h0M365 105h0M331 67h0M366 65h0M340 91h0M347 145h0M359 121h0M377 145h0M362 114h0M351 138h0M329 141h0M342 150h0M342 139h0M352 150h0M377 136h0M357 144h0M363 151h0M354 155h0M355 161h0M369 118h0M340 133h0M370 152h0M353 121h0M354 111h0M366 140h0M354 132h0M376 140h0M370 122h0M344 111h0M361 137h0M359 114h0M336 123h0M364 154h0M330 131h0M353 150h0M335 134h0M329 122h0M335 130h0M381 150h0M339 123h0M340 134h0M347 127h0M360 111h0M362 112h0M365 156h0M430 25h0M427 21h0M393 19h0M411 9h0M393 25h0M406 54h0M428 11h0M385 38h0M396 1h0M396 21h0M420 15h0M390 51h0M423 39h0M382 18h0M386 48h0M398 23h0M389 38h0M421 36h0M392 15h0M403 21h0M394 16h0M416 31h0M434 16h0M431 12h0M418 52h0M402 18h0M397 9h0M407 9h0M394 5h0M404 8h0M419 30h0M383 21h0M408 32h0M400 49h0M396 36h0M407 33h0M401 31h0M423 34h0M404 77h0M426 102h0M431 56h0M409 71h0M435 63h0M394 91h0M381 84h0M394 81h0M411 88h0M427 107h0M400 103h0M420 92h0M434 99h0M415 81h0M401 70h0M410 67h0M399 64h0M387 93h0M406 96h0M390 102h0M384 68h0M425 76h0M395 93h0M399 96h0M426 85h0M420 88h0M425 61h0M418 67h0M382 86h0M434 62h0M404 89h0M397 94h0M411 81h0M398 98h0M397 76h0M423 108h0M419 84h0M389 64h0M432 68h0M412 62h0M396 67h0M385 157h0M386 119h0M436 120h0M408 131h0M403 112h0M417 143h0M432 156h0M405 154h0M391 110h0M388 113h0M422 126h0M382 120h0M382 137h0M424 149h0M425 154h0M435 114h0M403 147h0M431 110h0M394 130h0M417 153h0M416 128h0M431 126h0M400 149h0M422 139h0M391 115h0M409 131h0M411 161h0M429 126h0M387 163h0M434 121h0M420 118h0M418 160h0M391 128h0M389 143h0M416 120h0M430 155h0M409 140h0M427 146h0M418 132h0M394 141h0M409 111h0M406 141h0M432 117h0M435 149h0M40 217h0M47 170h0M27 176h0M35 214h0M43 191h0M4 211h0M14 207h0M29 210h0M30 206h0M13 207h0M42 193h0M43 171h0M5 165h0M47 209h0M10 184h0M54 174h0M48 203h0M18 180h0M15 196h0M10 170h0M25 170h0M51 196h0M11 217h0M40 183h0M22 171h0M23 208h0M25 191h0M19 201h0M32 179h0M16 210h0M25 214h0M40 196h0M3 186h0M24 215h0M38 200h0M22 170h0M14 186h0M45 209h0M30 169h0M5 183h0M39 200h0M34 243h0M25 235h0M33 270h0M54 239h0M35 256h0M4 243h0M36 229h0M11 238h0M9 253h0M40 231h0M40 260h0M26 218h0M19 247h0M6 261h0M28 224h0M7 222h0M16 260h0M23 221h0M25 248h0M46 223h0M8 270h0M22 251h0M8 262h0M39 226h0M2 224h0M53 253h0M14 224h0M18 244h0M48 269h0M27 267h0M16 258h0M20 241h0M20 241h0M29 247h0M12 223h0M17 244h0M32 324h0M33 292h0M33 304h0M27 300h0M3 277h0M15 315h0M47 294h0M37 277h0M45 290h0M45 315h0M34 302h0M35 273h0M40 295h0M43 296h0M21 296h0M6 289h0M4 278h0M36 302h0M6 289h0M31 322h0M23 301h0M7 320h0M2 295h0M37 322h0M38 293h0M6 312h0M32 283h0M9 291h0M28 293h0M46 291h0M26 325h0M38 285h0M40 303h0M3 317h0M39 296h0M30 325h0M25 298h0M41 278h0M46 274h0M31 302h0M8 324h0M98 169h0M66 174h0M88 170h0M86 212h0M92 183h0M94 179h0M94 178h0M56 192h0M70 177h0M81 178h0M70 191h0M63 210h0M88 193h0M84 199h0M105 183h0M67 188h0M94 215h0M85 182h0M106 169h0M90 167h0M60 194h0M108 180h0M56 194h0M92 210h0M83 167h0M65 192h0M82 174h0M81 194h0M85 171h0M73 201h0M108 215h0M81 195h0M88 197h0M59 191h0M56 169h0M100 201h0M86 204h0M55 167h0M108 209h0M96 232h0M83 236h0M79 230h0M64 226h0M81 260h0M67 253h0M83 231h0M65 230h0M72 257h0M96 231h0M77 271h0M74 267h0M76 225h0M97 236h0M75 233h0M95 243h0M55 245h0M58 267h0M66 265h0M105 236h0M62 256h0M65 225h0M103 257h0M79 238h0M71 228h0M83 247h0M96 246h0M71 259h0M82 226h0M85 234h0M107 243h0M101 243h0M63 227h0M66 219h0M98 245h0M71 220h0M88 292h0M88 289h0M103 304h0M84 297h0M104 285h0M101 320h0M82 326h0M64 311h0M86 281h0M70 277h0M73 302h0M105 300h0M55 299h0M86 306h0M59 299h0M89 325h0M79 277h0M67 317h0M68 321h0M78 302h0M81 298h0M100 299h0M65 284h0M98 325h0M92 315h0M99 316h0M99 288h0M105 273h0M73 315h0M104 323h0M58 308h0M108 319h0M65 310h0M108 306h0M94 275h0M96 315h0M85 323h0M81 293h0M56 281h0M67 308h0M92 300h0M69 282h0M92 323h0M105 322h0M161 197h0M151 181h0M156 192h0M149 177h0M141 176h0M113 166h0M138 215h0M132 185h0M135 215h0M133 200h0M139 198h0M158 177h0M163 192h0M151 166h0M139 178h0M149 181h0M144 202h0M132 169h0M113 178h0M133 170h0M140 204h0M144 200h0M111 202h0M113 184h0M115 215h0M135 195h0M163 170h0M121 210h0M131 185h0M123 206h0M133 183h0M134 180h0M131 180h0M134 189h0M134 184h0M162 206h0M146 204h0M148 215h0M145 187h0M121 205h0M162 182h0M110 240h0M123 251h0M131 272h0M159 221h0M154 263h0M141 256h0M150 249h0M147 248h0M163 225h0M127 257h0M124 248h0M136 227h0M158 254h0M153 240h0M142 243h0M163 249h0M125 255h0M154 238h0M129 253h0M126 265h0M123 227h0M114 261h0M123 244h0M110 262h0M120 256h0M127 265h0M135 235h0M153 249h0M163 230h0M143 226h0M128 242h0M154 267h0M118 237h0M121 266h0M121 237h0M148 220h0M112 263h0M128 271h0M156 221h0M110 256h0M124 254h0M127 297h0M140 291h0M122 288h0M110 289h0M124 278h0M134 300h0M157 313h0M145 310h0M131 293h0M134 301h0M152 321h0M152 306h0M119 319h0M146 310h0M134 294h0M157 326h0M154 276h0M162 302h0M126 319h0M163 276h0M110 280h0M144 278h0M160 296h0M141 304h0M134 321h0M121 296h0M127 303h0M110 284h0M121 276h0M127 324h0M114 307h0M153 311h0M112 274h0M118 298h0M126 286h0M119 307h0M160 274h0M130 317h0M148 282h0M162 285h0M119 285h0M209 201h0M200 197h0M190 184h0M166 165h0M184 181h0M196 213h0M191 190h0M194 176h0M203 167h0M165 174h0M209 197h0M208 171h0M165 165h0M210 196h0M165 169h0M174 169h0M198 172h0M193 184h0M194 191h0M189 165h0M212 195h0M193 214h0M184 202h0M179 179h0M206 201h0M174 185h0M205 169h0M204 210h0M196 215h0M195 212h0M209 199h0M171 185h0M198 178h0M196 174h0M210 217h0M183 201h0M210 174h0M164 235h0M202 230h0M203 264h0M186 235h0M180 258h0M201 226h0M216 229h0M172 220h0M173 257h0M169 220h0M208 255h0M210 238h0M198 219h0M192 225h0M208 236h0M200 257h0M194 249h0M200 271h0M206 252h0M164 244h0M196 245h0M167 225h0M201 271h0M179 242h0M207 239h0M190 239h0M185 222h0M172 226h0M196 259h0M179 238h0M175 218h0M190 225h0M200 229h0M196 220h0M182 225h0M169 220h0M189 267h0M175 220h0M189 234h0M214 324h0M181 311h0M207 274h0M171 302h0M211 286h0M181 281h0M205 290h0M201 312h0M170 277h0M208 299h0M183 292h0M216 305h0M202 305h0M205 305h0M216 294h0M184 294h0M199 291h0M210 316h0M209 293h0M177 289h0M207 322h0M184 278h0M177 313h0M211 291h0M174 288h0M198 316h0M188 305h0M165 295h0M216 292h0M211 303h0M207 277h0M169 277h0M172 326h0M212 324h0M199 298h0M200 281h0M186 300h0M201 303h0M208 277h0M220 172h0M235 187h0M249 178h0M236 209h0M218 193h0M266 167h0M260 195h0M240 192h0M243 177h0M224 171h0M272 209h0M227 208h0M228 204h0M269 175h0M227 176h0M267 189h0M237 176h0M257 205h0M243 189h0M243 200h0M236 194h0M220 184h0M220 168h0M235 183h0M225 195h0M239 173h0M219 205h0M228 180h0M258 180h0M237 189h0M232 207h0M251 215h0M227 217h0M262 170h0M242 209h0M229 212h0M246 166h0M234 186h0M231 203h0M240 247h0M255 236h0M234 234h0M266 237h0M247 219h0M261 248h0M237 258h0M261 263h0M257 254h0M247 249h0M259 251h0M267 220h0M238 269h0M249 225h0M245 258h0M266 218h0M258 265h0M233 222h0M258 221h0M247 219h0M236 223h0M269 224h0M233 254h0M236 240h0M242 250h0M269 267h0M230 231h0M253 251h0M223 229h0M264 220h0M231 260h0M232 223h0M271 257h0M259 259h0M233 246h0M236 252h0M271 229h0M270 269h0M264 264h0M249 276h0M221 312h0M267 326h0M255 308h0M267 311h0M243 283h0M255 302h0M218 294h0M230 284h0M256 322h0M219 319h0M258 305h0M236 276h0M221 309h0M254 305h0M270 316h0M243 273h0M253 319h0M238 272h0M252 326h0M264 314h0M243 321h0M218 290h0M272 293h0M256 277h0M239 279h0M241 316h0M271 283h0M230 273h0M267 288h0M246 286h0M221 291h0M262 314h0M250 319h0M221 279h0M264 326h0M226 303h0M251 279h0M246 287h0M239 276h0M232 284h0M251 289h0M322 217h0M323 177h0M278 215h0M316 167h0M317 190h0M301 214h0M279 202h0M290 205h0M295 192h0M288 212h0M314 183h0M272 216h0M281 166h0M306 215h0M285 175h0M274 190h0M292 215h0M317 192h0M274 196h0M275 201h0M310 209h0M286 172h0M322 213h0M275 183h0M292 174h0M306 199h0M301 166h0M316 177h0M286 185h0M273 193h0M311 215h0M285 174h0M279 214h0M320 184h0M282 203h0M284 163h0M277 261h0M298 224h0M280 225h0M307 261h0M280 234h0M299 219h0M309 262h0M322 263h0M316 229h0M275 259h0M326 233h0M320 270h0M320 268h0M306 221h0M324 245h0M303 221h0M277 240h0M313 264h0M296 221h0M303 240h0M297 221h0M277 241h0M317 251h0M303 226h0M318 249h0M307 220h0M296 264h0M303 240h0M274 262h0M281 218h0M286 251h0M313 233h0M288 259h0M320 255h0M291 270h0M286 253h0M279 220h0M286 223h0M280 259h0M292 268h0M318 271h0M323 251h0M290 293h0M286 307h0M292 296h0M302 300h0M302 309h0M302 285h0M296 320h0M288 303h0M297 282h0M277 284h0M301 281h0M305 306h0M306 288h0M310 284h0M304 325h0M302 314h0M293 296h0M312 282h0M326 299h0M273 304h0M306 315h0M313 305h0M302 308h0M277 309h0M296 325h0M281 300h0M281 320h0M311 281h0M327 277h0M273 325h0M297 307h0M281 291h0M320 278h0M298 302h0M305 290h0M305 287h0M320 275h0M299 288h0M285 296h0M305 287h0M298 315h0M340 216h0M345 177h0M351 200h0M374 178h0M351 185h0M355 193h0M379 204h0M336 190h0M330 180h0M380 198h0M359 213h0M340 183h0M333 213h0M338 190h0M342 195h0M340 173h0M364 176h0M359 204h0M345 217h0M331 193h0M341 205h0M335 200h0M361 187h0M365 209h0M340 206h0M334 191h0M357 179h0M350 208h0M351 205h0M349 170h0M377 201h0M355 183h0M369 164h0M355 171h0M341 185h0M359 187h0M350 206h0M333 190h0M343 215h0M367 226h0M333 230h0M328 267h0M347 218h0M363 220h0M331 230h0M369 230h0M370 250h0M337 221h0M355 250h0M361 248h0M349 263h0M375 271h0M369 255h0M340 223h0M340 251h0M360 241h0M343 256h0M344 235h0M350 252h0M369 262h0M380 242h0M362 235h0M350 248h0M347 218h0M353 269h0M376 271h0M342 219h0M331 234h0M364 262h0M337 245h0M347 245h0M343 254h0M341 221h0M359 256h0M378 257h0M374 227h0M357 250h0M364 220h0M352 229h0M361 264h0M341 243h0M346 249h0M355 312h0M376 305h0M342 321h0M373 285h0M364 282h0M335 293h0M345 292h0M349 277h0M346 311h0M380 320h0M373 322h0M347 290h0M350 298h0M361 280h0M340 306h0M379 296h0M344 324h0M340 301h0M378 276h0M366 299h0M336 289h0M355 313h0M334 299h0M370 300h0M347 274h0M348 317h0M350 301h0M331 323h0M381 302h0M360 298h0M362 296h0M329 288h0M368 298h0M369 300h0M329 324h0M356 323h0M364 278h0M360 294h0M400 199h0M408 186h0M384 176h0M390 189h0M415 203h0M434 184h0M422 165h0M396 193h0M428 191h0M386 199h0M415 190h0M404 173h0M415 208h0M391 215h0M409 188h0M396 173h0M384 198h0M395 215h0M406 214h0M407 204h0M398 167h0M422 196h0M422 173h0M401 203h0M383 186h0M427 209h0M391 181h0M383 172h0M428 216h0M412 168h0M417 208h0M409 216h0M406 198h0M413 214h0M430 211h0M383 196h0M434 194h0M423 172h0M405 175h0M401 258h0M399 221h0M422 263h0M385 233h0M397 262h0M383 251h0M411 221h0M410 234h0M390 244h0M413 254h0M414 232h0M392 250h0M425 246h0M435 261h0M396 252h0M391 223h0M402 268h0M410 236h0M384 224h0M398 218h0M402 260h0M434 222h0M417 219h0M386 222h0M433 267h0M386 260h0M424 252h0M405 233h0M384 259h0M387 268h0M414 249h0M400 225h0M402 250h0M385 241h0M432 251h0M406 218h0M385 225h0M411 229h0M427 242h0M397 252h0M431 284h0M385 297h0M391 282h0M416 280h0M419 319h0M428 284h0M414 306h0M411 285h0M386 275h0M386 320h0M389 325h0M382 293h0M398 276h0M382 296h0M394 322h0M409 316h0M422 314h0M422 291h0M404 278h0M395 299h0M414 321h0M419 312h0M431 304h0M411 301h0M398 282h0M398 311h0M381 283h0M403 309h0M387 310h0M386 306h0M415 299h0M435 319h0M426 308h0M436 276h0M394 317h0M394 298h0M421 304h0M432 277h0M397 305h0M397 289h0M424 325h0M415 312h0M421 287h0M445 177h0M473 208h0M464 217h0M483 205h0M454 190h0M439 168h0M488 171h0M461 206h0M472 166h0M468 203h0M441 180h0M471 215h0M486 170h0M456 209h0M469 213h0M466 175h0M455 164h0M443 178h0M439 205h0M442 197h0M465 168h0M460 193h0M486 181h0M447 203h0M447 174h0M481 187h0M461 195h0M460 177h0M454 174h0M438 176h0M446 209h0M484 170h0M453 191h0M437 182h0M436 182h0M483 175h0M445 209h0M460 175h0M490 256h0M455 271h0M465 244h0M490 262h0M447 270h0M487 234h0M465 244h0M486 263h0M482 227h0M453 220h0M436 270h0M462 221h0M478 234h0M459 249h0M456 248h0M458 272h0M477 222h0M465 227h0M484 225h0M488 237h0M475 248h0M453 262h0M487 221h0M484 260h0M454 241h0M441 257h0M461 269h0M484 228h0M452 245h0M490 267h0M489 258h0M441 240h0M441 267h0M449 222h0M454 269h0M473 251h0M463 240h0M439 230h0M453 236h0M452 313h0M466 311h0M475 291h0M441 289h0M465 319h0M447 306h0M441 276h0M484 314h0M483 318h0M457 325h0M471 306h0M441 290h0M470 308h0M485 272h0M441 292h0M461 315h0M455 315h0M476 305h0M437 292h0M456 287h0M468 310h0M470 293h0M452 284h0M441 278h0M490 315h0M476 283h0M442 279h0M442 324h0M486 279h0M484 273h0M471 324h0M482 289h0M487 321h0M477 315h0M459 303h0M467 273h0M483 311h0M487 313h0M487 295h0M436 289h0M502 199h0M526 213h0M506 185h0M530 217h0M519 203h0M519 200h0M529 208h0M537 204h0M499 199h0M499 213h0M536 215h0M528 193h0M514 186h0M536 181h0M530 215h0M536 190h0M492 172h0M511 184h0M537 176h0M510 205h0M494 189h0M515 193h0M512 191h0M527 174h0M505 215h0M538 216h0M510 204h0M542 190h0M528 197h0M521 186h0M532 174h0M504 216h0M515 216h0M537 191h0M511 168h0M515 189h0M519 172h0M527 191h0M517 185h0M523 166h0M504 249h0M532 270h0M524 245h0M530 228h0M522 232h0M516 235h0M526 250h0M514 238h0M520 232h0M503 222h0M540 264h0M523 245h0M499 242h0M520 271h0M520 250h0M540 263h0M539 254h0M531 241h0M518 252h0M539 244h0M529 254h0M518 233h0M499 234h0M506 248h0M525 253h0M512 241h0M501 259h0M538 221h0M502 225h0M509 227h0M519 247h0M524 260h0M529 263h0M515 255h0M542 233h0M516 270h0M504 252h0M509 225h0M514 249h0M541 223h0M494 247h0M542 241h0M492 285h0M510 274h0M510 301h0M507 298h0M500 300h0M521 312h0M502 323h0M507 295h0M502 319h0M520 305h0M514 279h0M530 318h0M496 297h0M511 323h0M538 276h0M528 318h0M537 313h0M529 300h0M539 318h0M517 288h0M511 302h0M532 308h0M501 285h0M513 299h0M544 286h0M518 272h0M492 304h0M511 326h0M491 278h0M530 312h0M538 281h0M521 301h0M507 321h0M528 303h0M508 289h0M532 307h0M491 305h0M520 300h0M521 322h0M531 297h0M532 300h0M561 216h0M549 192h0M577 179h0M571 208h0M593 193h0M568 214h0M574 183h0M559 187h0M581 168h0M562 178h0M561 203h0M593 201h0M580 183h0M560 193h0M591 177h0M576 211h0M592 214h0M567 216h0M574 206h0M573 199h0M565 164h0M590 203h0M586 169h0M595 169h0M588 171h0M574 173h0M574 164h0M545 212h0M584 163h0M559 199h0M575 170h0M585 170h0M595 185h0M580 182h0M565 208h0M554 193h0M551 213h0M578 166h0M598 200h0M581 189h0M557 171h0M578 258h0M567 248h0M580 241h0M568 238h0M547 271h0M590 237h0M552 255h0M599 231h0M563 246h0M567 267h0M568 267h0M589 247h0M584 253h0M599 223h0M584 256h0M585 220h0M592 240h0M583 245h0M571 224h0M586 227h0M590 218h0M564 237h0M576 233h0M568 266h0M584 255h0M594 226h0M591 219h0M567 268h0M557 221h0M575 243h0M548 237h0M560 228h0M596 265h0M563 238h0M594 269h0M582 224h0M554 258h0M547 253h0M593 227h0M568 220h0M562 260h0M596 281h0M565 289h0M586 272h0M552 289h0M570 323h0M568 326h0M555 307h0M584 300h0M563 324h0M588 301h0M570 324h0M597 289h0M575 302h0M591 282h0M573 294h0M594 326h0M576 277h0M563 277h0M552 324h0M557 296h0M571 282h0M596 306h0M589 301h0M569 316h0M573 282h0M557 305h0M547 277h0M554 288h0M591 292h0M587 282h0M547 298h0M576 288h0M572 299h0M583 320h0M597 316h0M588 283h0M585 279h0M595 282h0M559 315h0M630 200h0M610 200h0M613 206h0M622 169h0M609 183h0M613 169h0M608 173h0M640 199h0M616 178h0M630 170h0M633 178h0M619 198h0M644 163h0M630 173h0M629 170h0M601 200h0M644 209h0M650 207h0M647 164h0M611 175h0M602 216h0M636 182h0M630 190h0M630 188h0M643 197h0M653 188h0M608 183h0M613 217h0M634 202h0M641 210h0M630 199h0M602 173h0M634 210h0M608 186h0M613 190h0M605 173h0M628 173h0M630 216h0M633 168h0M637 253h0M612 272h0M637 231h0M638 245h0M623 219h0M642 224h0M618 270h0M630 221h0M617 272h0M615 236h0M608 235h0M642 234h0M645 270h0M603 263h0M600 233h0M625 227h0M611 227h0M600 229h0M651 224h0M636 219h0M616 238h0M633 226h0M641 253h0M652 263h0M619 218h0M603 220h0M653 242h0M600 226h0M618 232h0M654 271h0M637 227h0M626 235h0M611 261h0M633 222h0M643 270h0M635 259h0M637 237h0M608 252h0M623 250h0M645 320h0M638 307h0M626 292h0M614 322h0M621 317h0M609 308h0M621 302h0M638 293h0M609 306h0M642 274h0M608 319h0M619 277h0M610 325h0M600 272h0M624 302h0M645 279h0M624 298h0M612 282h0M629 286h0M605 276h0M623 297h0M653 273h0M602 288h0M624 310h0M637 276h0M614 298h0M602 307h0M632 283h0M626 287h0M612 322h0M639 299h0M618 300h0M627 273h0M605 298h0M649 319h0M623 288h0M643 313h0M609 318h0M629 296h0M679 215h0M674 193h0M703 210h0M674 180h0M690 197h0M690 164h0M691 203h0M666 214h0M687 208h0M664 175h0M702 182h0M708 190h0M701 214h0M690 164h0M687 216h0M673 173h0M701 192h0M666 171h0M670 189h0M668 176h0M705 176h0M676 167h0M684 177h0M698 189h0M689 204h0M706 169h0M655 170h0M661 171h0M698 206h0M684 204h0M658 188h0M679 216h0M671 195h0M670 185h0M704 166h0M684 213h0M689 164h0M689 181h0M707 194h0M684 177h0M674 164h0M676 174h0M658 269h0M669 247h0M675 262h0M704 259h0M663 256h0M698 220h0M654 254h0M691 254h0M693 247h0M662 243h0M657 248h0M658 258h0M702 270h0M686 243h0M686 236h0M683 241h0M692 263h0M660 222h0M658 243h0M678 265h0M680 232h0M685 224h0M669 257h0M665 231h0M685 261h0M690 231h0M702 218h0M689 230h0M670 260h0M658 266h0M663 256h0M687 242h0M703 253h0M696 227h0M663 262h0M685 254h0M682 242h0M707 224h0M700 219h0M682 230h0M669 223h0M684 291h0M664 288h0M657 299h0M669 281h0M655 273h0M674 286h0M676 305h0M692 323h0M694 299h0M676 298h0M704 314h0M677 312h0M679 310h0M684 284h0M666 283h0M690 289h0M690 313h0M697 319h0M675 326h0M698 318h0M701 317h0M703 316h0M703 277h0M698 281h0M697 317h0M676 310h0M688 291h0M664 305h0M666 312h0M685 301h0M654 301h0M702 325h0M662 319h0M706 323h0M656 275h0M680 306h0M686 277h0M694 284h0M689 325h0M717 195h0M754 165h0M735 205h0M752 206h0M743 193h0M741 187h0M750 198h0M759 207h0M736 190h0M755 216h0M741 184h0M743 201h0M728 190h0M762 191h0M761 165h0M714 190h0M712 195h0M727 193h0M716 177h0M743 193h0M754 204h0M758 168h0M755 180h0M709 171h0M743 206h0M753 173h0M711 189h0M709 174h0M761 182h0M748 165h0M719 178h0M726 180h0M759 177h0M712 207h0M712 183h0M758 189h0M712 212h0M722 209h0M734 233h0M722 247h0M709 224h0M732 245h0M722 228h0M749 257h0M741 231h0M743 261h0M740 256h0M750 232h0M725 246h0M718 247h0M746 255h0M741 226h0M723 218h0M761 243h0M742 220h0M762 253h0M757 254h0M754 249h0M737 235h0M715 271h0M732 251h0M741 221h0M714 265h0M751 258h0M739 221h0M751 229h0M713 254h0M711 251h0M718 267h0M709 222h0M719 264h0M713 262h0M715 218h0M733 245h0M713 218h0M731 257h0M740 258h0M720 246h0M761 230h0M724 237h0M762 238h0M753 285h0M710 291h0M728 290h0M721 313h0M755 274h0M751 315h0M714 309h0M735 314h0M729 306h0M762 320h0M731 301h0M712 292h0M729 320h0M736 322h0M709 304h0M725 292h0M756 303h0M741 321h0M738 296h0M761 307h0M734 283h0M720 284h0M715 286h0M714 318h0M720 314h0M728 272h0M759 299h0M740 277h0M755 306h0M755 288h0M751 318h0M762 283h0M736 303h0M734 314h0M732 309h0M722 291h0M723 300h0M721 317h0M735 291h0M738 318h0M722 317h0M739 314h0M779 196h0M799 206h0M805 170h0M799 198h0M765 192h0M782 205h0M774 216h0M807 186h0M815 166h0M795 216h0M777 171h0M772 182h0M773 174h0M790 213h0M804 186h0M813 174h0M788 189h0M800 171h0M807 186h0M776 196h0M774 180h0M803 193h0M782 166h0M788 209h0M778 171h0M800 193h0M770 178h0M772 217h0M772 163h0M765 200h0M778 209h0M770 207h0M816 174h0M763 170h0M815 204h0M784 193h0M766 174h0M765 216h0M788 187h0M808 186h0M815 233h0M815 234h0M790 254h0M784 253h0M815 239h0M805 235h0M803 260h0M781 249h0M788 248h0M770 229h0M791 229h0M774 242h0M778 222h0M801 237h0M771 234h0M781 234h0M790 258h0M816 251h0M783 233h0M788 247h0M767 219h0M782 257h0M778 227h0M794 242h0M773 268h0M780 235h0M781 238h0M763 237h0M796 236h0M786 226h0M774 256h0M772 259h0M781 267h0M791 271h0M810 239h0M789 256h0M802 259h0M798 261h0M815 253h0M795 235h0M805 264h0M798 247h0M771 274h0M816 317h0M797 283h0M805 311h0M771 291h0M774 281h0M772 286h0M774 278h0M781 280h0M785 276h0M765 312h0M788 279h0M773 281h0M767 313h0M808 295h0M782 308h0M801 296h0M795 287h0M784 295h0M768 309h0M817 275h0M800 323h0M792 296h0M781 282h0M806 325h0M796 283h0M771 319h0M783 290h0M786 276h0M786 278h0M774 282h0M776 290h0M813 304h0M808 322h0M764 316h0M801 312h0M774 323h0M776 301h0M775 306h0M763 306h0M867 165h0M824 213h0M825 189h0M851 189h0M829 167h0M845 171h0M833 164h0M853 204h0M867 200h0M860 178h0M828 198h0M842 183h0M849 203h0M824 197h0M847 208h0M859 196h0M848 191h0M835 183h0M832 173h0M847 187h0M857 214h0M823 199h0M827 215h0M825 163h0M864 181h0M837 186h0M868 167h0M856 206h0M832 165h0M848 212h0M850 184h0M870 189h0M846 177h0M821 186h0M848 184h0M837 204h0M851 215h0M833 197h0M856 210h0M818 198h0M854 206h0M827 183h0M862 202h0M847 258h0M827 269h0M844 248h0M830 221h0M861 232h0M841 233h0M831 232h0M864 256h0M825 220h0M853 227h0M863 220h0M862 253h0M857 268h0M851 250h0M870 254h0M824 244h0M854 244h0M828 258h0M859 228h0M823 227h0M832 269h0M845 223h0M823 264h0M837 223h0M821 254h0M832 253h0M821 267h0M861 268h0M824 241h0M854 224h0M861 243h0M865 241h0M848 260h0M825 228h0M841 272h0M829 238h0M818 227h0M837 255h0M820 267h0M852 250h0M825 242h0M869 231h0M861 323h0M842 318h0M824 284h0M817 275h0M862 317h0M841 292h0M854 326h0M850 322h0M828 300h0M867 316h0M852 307h0M825 304h0M840 292h0M839 300h0M846 276h0M860 323h0M842 297h0M821 291h0M826 297h0M825 304h0M824 301h0M848 289h0M850 272h0M858 290h0M864 322h0M833 286h0M860 306h0M840 307h0M818 300h0M844 321h0M831 281h0M834 278h0M869 314h0M830 299h0M851 287h0M859 287h0M848 303h0M861 297h0M860 303h0M838 278h0M240 327h0M259 337h0M221 334h0M230 362h0M260 351h0M240 335h0M246 368h0M231 340h0M257 354h0M271 346h0M230 342h0M246 349h0M263 345h0M246 378h0M269 346h0M229 371h0M256 348h0M269 373h0M269 344h0M221 353h0M225 365h0M263 376h0M242 345h0M240 351h0M226 332h0M268 380h0M229 331h0M263 345h0M229 365h0M270 328h0M295 351h0M285 376h0M302 374h0M318 333h0M284 354h0M321 338h0M294 344h0M299 370h0M318 372h0M323 377h0M302 374h0M320 343h0M293 378h0M293 327h0M303 342h0M295 355h0M312 356h0M324 342h0M312 349h0M296 357h0M320 335h0M299 335h0M287 346h0M284 342h0M279 354h0M274 371h0M320 329h0M304 362h0M297 352h0M278 341h0M349 360h0M380 338h0M328 371h0M343 350h0M334 354h0M353 366h0M371 340h0M357 367h0M373 369h0M366 374h0M336 339h0M379 343h0M343 365h0M381 357h0M336 373h0M334 373h0M352 337h0M364 373h0M353 354h0M328 359h0M373 368h0M358 340h0M363 340h0M331 363h0M339 365h0M339 327h0M379 331h0M348 329h0M381 365h0M369 334h0M386 377h0M409 366h0M405 364h0M392 347h0M395 346h0M415 341h0M397 379h0M429 348h0M424 336h0M423 373h0M416 328h0M388 330h0M385 353h0M392 370h0M416 360h0M402 340h0M389 366h0M435 344h0M435 340h0M399 327h0M388 369h0M384 356h0M431 370h0M382 342h0M429 341h0M393 366h0M407 367h0M394 354h0M258 425h0M264 433h0M246 413h0M247 414h0M234 389h0M221 398h0M264 413h0M261 434h0M236 391h0M258 403h0M264 429h0M264 395h0M263 426h0M228 411h0M239 433h0M227 390h0M249 436h0M228 440h0M263 441h0M269 489h0M264 486h0M257 482h0M250 481h0M268 485h0M228 454h0M218 451h0M271 462h0M224 464h0M235 471h0M243 459h0M228 454h0M221 448h0M259 457h0M246 451h0M319 400h0M317 427h0M282 424h0M278 414h0M309 431h0M282 385h0M286 428h0M293 422h0M300 387h0M326 414h0M285 423h0M303 383h0M298 427h0M275 410h0M274 387h0M296 450h0M275 451h0M286 488h0M297 487h0M285 461h0M295 477h0M316 486h0M309 449h0M321 461h0M275 466h0M322 439h0M314 469h0M325 439h0M278 448h0M275 477h0M370 413h0M370 431h0M351 396h0M374 421h0M330 407h0M361 410h0M371 406h0M375 409h0M362 427h0M361 390h0M359 420h0M329 395h0M335 399h0M335 396h0M377 420h0M365 474h0M328 452h0M363 439h0M366 437h0M347 453h0M345 478h0M358 472h0M368 484h0M350 469h0M330 457h0M356 460h0M337 460h0M364 451h0M340 447h0M366 481h0M409 416h0M410 387h0M404 407h0M409 391h0M416 413h0M400 415h0M419 435h0M418 424h0M384 409h0M415 422h0M425 420h0M394 405h0M429 410h0M420 409h0M428 387h0M433 449h0M396 477h0M389 443h0M406 479h0M411 440h0M433 439h0M396 470h0M384 445h0M404 481h0M408 447h0M395 476h0M435 446h0M416 442h0M399 471h0M413 451h0M435 455h0M383 460h0M487 38h0M456 12h0M478 2h0M447 34h0M477 19h0M437 16h0M473 26h0M439 6h0M471 50h0M468 23h0M452 27h0M456 24h0M488 27h0M445 22h0M446 20h0M471 4h0M482 1h0M476 2h0M489 4h0M489 15h0M479 0h0M454 45h0M472 1h0M462 50h0M481 38h0M468 23h0M489 36h0M466 29h0M453 22h0M469 27h0M448 5h0M465 40h0M454 52h0M447 47h0M439 43h0M487 24h0M457 38h0M472 12h0M436 39h0M457 53h0M440 53h0M467 29h0M471 44h0M455 27h0M442 35h0M480 17h0M490 99h0M440 62h0M456 90h0M473 82h0M443 68h0M465 106h0M446 83h0M436 82h0M471 82h0M460 59h0M483 104h0M476 88h0M464 72h0M461 104h0M449 89h0M462 66h0M470 62h0M461 94h0M485 68h0M439 94h0M487 87h0M466 96h0M456 90h0M451 65h0M450 56h0M459 95h0M468 90h0M488 78h0M459 79h0M476 68h0M460 55h0M436 62h0M478 56h0M458 55h0M455 108h0M474 66h0M436 95h0M439 107h0M446 57h0M449 58h0M446 58h0M481 78h0M483 64h0M438 100h0M467 82h0M485 152h0M474 121h0M464 110h0M487 125h0M489 132h0M455 123h0M487 135h0M469 122h0M486 116h0M475 117h0M462 137h0M466 126h0M465 156h0M461 155h0M447 129h0M441 152h0M471 119h0M486 127h0M455 124h0M473 150h0M469 154h0M440 118h0M442 123h0M476 133h0M471 146h0M456 137h0M443 134h0M477 124h0M475 143h0M445 127h0M462 113h0M490 109h0M458 163h0M451 135h0M483 146h0M485 158h0M480 159h0M486 126h0M478 154h0M484 145h0M487 131h0M485 129h0M484 151h0M453 136h0M480 126h0M478 115h0M520 37h0M504 48h0M510 6h0M492 16h0M492 3h0M502 5h0M496 9h0M511 37h0M526 15h0M504 5h0M504 0h0M493 6h0M501 20h0M507 42h0M539 38h0M514 18h0M545 4h0M535 30h0M545 18h0M516 6h0M506 17h0M539 31h0M526 24h0M523 54h0M539 2h0M498 17h0M538 25h0M535 42h0M492 6h0M522 54h0M498 13h0M531 30h0M531 21h0M494 42h0M529 52h0M491 7h0M518 19h0M505 53h0M513 40h0M534 43h0M504 27h0M505 49h0M503 21h0M523 30h0M531 22h0M538 82h0M508 63h0M503 58h0M509 97h0M502 72h0M518 103h0M522 55h0M498 84h0M542 85h0M495 95h0M507 84h0M523 55h0M526 102h0M526 69h0M541 72h0M504 79h0M512 62h0M544 69h0M541 64h0M529 63h0M524 102h0M532 89h0M529 70h0M515 56h0M492 108h0M539 87h0M493 75h0M499 92h0M515 57h0M537 108h0M491 102h0M492 82h0M544 85h0M513 73h0M495 76h0M500 100h0M529 87h0M505 64h0M507 61h0M497 108h0M527 108h0M538 72h0M515 84h0M532 75h0M538 82h0M515 119h0M505 129h0M506 127h0M523 155h0M504 118h0M512 151h0M501 147h0M515 116h0M535 148h0M539 115h0M527 116h0M514 118h0M504 138h0M521 127h0M538 142h0M516 113h0M501 113h0M495 137h0M493 133h0M528 155h0M521 130h0M543 122h0M491 159h0M514 129h0M504 119h0M535 162h0M504 126h0M538 152h0M540 136h0M525 150h0M510 139h0M530 121h0M527 132h0M542 161h0M538 152h0M534 154h0M496 158h0M493 128h0M507 119h0M536 111h0M541 153h0M521 119h0M537 159h0M491 110h0M511 115h0M516 162h0M679 6h0M703 6h0M707 32h0M687 26h0M659 31h0M655 17h0M686 45h0M658 52h0M698 6h0M690 22h0M657 6h0M678 9h0M678 42h0M675 19h0M691 20h0M660 12h0M654 49h0M677 5h0M673 19h0M661 3h0M661 11h0M662 8h0M684 15h0M683 11h0M685 8h0M656 17h0M675 27h0M678 47h0M679 54h0M660 45h0M687 26h0M664 54h0M676 44h0M674 44h0M672 50h0M665 48h0M666 29h0M696 6h0M485 346h0M460 359h0M437 327h0M465 366h0M447 378h0M450 336h0M449 338h0M459 379h0M438 330h0M464 359h0M452 336h0M488 375h0M476 343h0M447 359h0M466 373h0M479 365h0M466 343h0M475 342h0M474 381h0M464 368h0M441 374h0M456 346h0M472 350h0M447 427h0M486 388h0M450 384h0M442 382h0M453 411h0M464 428h0M481 394h0M448 401h0M489 422h0M451 421h0M489 431h0M484 386h0M452 394h0M447 407h0M464 434h0M441 389h0M488 425h0M490 383h0M445 424h0M454 430h0M468 423h0M466 399h0M458 433h0M484 420h0M462 489h0M471 468h0M471 462h0M488 456h0M488 451h0M436 441h0M462 437h0M467 470h0M452 458h0M485 478h0M485 436h0M465 438h0M489 454h0M483 445h0M456 450h0M448 488h0M439 443h0M450 448h0M437 468h0M482 481h0M469 487h0M487 464h0M445 477h0M437 443h0M536 335h0M523 358h0M522 378h0M506 380h0M508 350h0M493 376h0M517 350h0M534 359h0M515 343h0M539 336h0M512 365h0M532 367h0M526 346h0M497 331h0M492 332h0M523 351h0M497 328h0M506 356h0M537 352h0M533 353h0M540 330h0M509 342h0M510 367h0M537 374h0M493 413h0M492 406h0M533 424h0M533 382h0M537 398h0M536 430h0M521 397h0M517 427h0M501 414h0M496 418h0M539 431h0M516 388h0M491 409h0M543 398h0M541 407h0M541 434h0M526 386h0M512 422h0M526 426h0M507 384h0M530 383h0M544 400h0M529 392h0M534 473h0M518 473h0M535 457h0M525 466h0M522 463h0M493 484h0M511 444h0M511 461h0M498 447h0M494 467h0M539 469h0M540 467h0M500 438h0M492 464h0M538 470h0M491 484h0M492 468h0M493 472h0M490 449h0M516 461h0M528 481h0M511 448h0M510 474h0M499 477h0M240 532h0M226 512h0M248 490h0M262 521h0M267 496h0M232 531h0M220 507h0M224 512h0M236 522h0M245 535h0M225 502h0M233 502h0M251 509h0M228 508h0M263 504h0M225 520h0M309 511h0M301 540h0M319 500h0M310 491h0M295 498h0M278 513h0M311 527h0M301 523h0M295 541h0M295 538h0M297 529h0M274 510h0M296 507h0M313 492h0M288 516h0M316 531h0M334 537h0M342 512h0M373 531h0M368 533h0M337 518h0M366 508h0M375 502h0M375 490h0M358 492h0M341 509h0M332 508h0M353 521h0M381 524h0M333 497h0M369 493h0M375 509h0M415 521h0M405 496h0M393 536h0M408 510h0M405 498h0M386 506h0M433 515h0M382 507h0M415 542h0M429 499h0M409 514h0M433 522h0M397 508h0M398 543h0M397 524h0M382 500h0M446 518h0M442 526h0M489 536h0M486 539h0M450 490h0M436 509h0M475 511h0M458 526h0M437 512h0M445 509h0M482 505h0M448 531h0M444 508h0M462 508h0M457 519h0M436 533h0M502 514h0M531 491h0M496 491h0M496 496h0M545 543h0M503 511h0M531 516h0M514 501h0M499 511h0M492 512h0M528 541h0M494 521h0M513 520h0M503 509h0M494 527h0M887 533h0M894 530h0M905 520h0M918 518h0M881 541h0M886 520h0M922 527h0M917 536h0M907 501h0M893 531h0M881 541h0M879 533h0M873 512h0" stroke="#f5a030" stroke-width="2.8" stroke-linecap="round"/><g stroke="#719ad6" stroke-opacity="0.2" stroke-width="1"><line x1="54.5" y1="0" x2="54.5" y2="544"/><line x1="108.9" y1="0" x2="108.9" y2="544"/><line x1="163.4" y1="0" x2="163.4" y2="544"/><line x1="217.9" y1="0" x2="217.9" y2="544"/><line x1="272.4" y1="0" x2="272.4" y2="544"/><line x1="326.8" y1="0" x2="326.8" y2="544"/><line x1="381.3" y1="0" x2="381.3" y2="544"/><line x1="435.8" y1="0" x2="435.8" y2="544"/><line x1="490.2" y1="0" x2="490.2" y2="544"/><line x1="544.7" y1="0" x2="544.7" y2="544"/><line x1="599.2" y1="0" x2="599.2" y2="544"/><line x1="653.6" y1="0" x2="653.6" y2="544"/><line x1="708.1" y1="0" x2="708.1" y2="544"/><line x1="762.6" y1="0" x2="762.6" y2="544"/><line x1="817.1" y1="0" x2="817.1" y2="544"/><line x1="871.5" y1="0" x2="871.5" y2="544"/><line x1="0" y1="54.4" x2="926" y2="54.4"/><line x1="0" y1="108.8" x2="926" y2="108.8"/><line x1="0" y1="163.2" x2="926" y2="163.2"/><line x1="0" y1="217.6" x2="926" y2="217.6"/><line x1="0" y1="272.0" x2="926" y2="272.0"/><line x1="0" y1="326.4" x2="926" y2="326.4"/><line x1="0" y1="380.8" x2="926" y2="380.8"/><line x1="0" y1="435.2" x2="926" y2="435.2"/><line x1="0" y1="489.6" x2="926" y2="489.6"/></g><rect x="1" y="1" width="924" height="542" fill="none" stroke="#5676a6" stroke-width="2"/></svg><div style="position:absolute;left:108px;top:774px;width:2px;height:2px;background:#b4b9ca"></div><div class="panel rp"></div><div class="panel hp"><div style="position:absolute;left:10px;top:10px;font-size:11px;letter-spacing:-0.2px;color:#a4bbe6">History</div></div><div class="card" style="top:84px;height:142px"><div class="h" style="top:12px">LAYERS</div><div class="cb off" style="top:38px"></div><div class="cbl" style="top:39px">Labels</div><div class="cb" style="top:62px"><svg width="13" height="13" style="position:absolute;left:0;top:0"><path d="M3 6.8 L5.5 9.2 L10.2 3.8" stroke="#fff" stroke-width="2" fill="none" stroke-linecap="round" stroke-linejoin="round"/></svg></div><div class="cbl" style="top:63px">Objects</div><div class="cb" style="top:86px"><svg width="13" height="13" style="position:absolute;left:0;top:0"><path d="M3 6.8 L5.5 9.2 L10.2 3.8" stroke="#fff" stroke-width="2" fill="none" stroke-linecap="round" stroke-linejoin="round"/></svg></div><div class="cbl" style="top:87px">Brushes</div><div class="cb" style="top:110px"><svg width="13" height="13" style="position:absolute;left:0;top:0"><path d="M3 6.8 L5.5 9.2 L10.2 3.8" stroke="#fff" stroke-width="2" fill="none" stroke-linecap="round" stroke-linejoin="round"/></svg></div><div class="cbl" style="top:111px">Heightmap</div></div><div class="card" style="top:238px;height:338px"><div class="h" style="top:12px">SELECTION</div><div class="t" style="top:37px">Click a tile.</div><div class="t" style="top:58px">Path: -</div><div class="t" style="top:78px;font-size:11.5px">No tile selected.</div><div class="t" style="top:103px">Selected Tiles</div><div class="inp" style="top:121px">(none)</div><div class="btn b1" style="left:10px;top:160px;width:78px">Add Tile</div><div class="btn b2" style="left:10px;top:192px;width:143px">Add Tile N</div><div class="btn b2" style="left:159px;top:192px;width:143px">Add Tile S</div><div class="btn b2" style="left:10px;top:230px;width:143px">Add Tile W</div><div class="btn b2" style="left:159px;top:230px;width:143px">Add Tile E</div><div class="btn b3" style="left:10px;top:262px;width:95px">Delete Tile</div><div class="btn b4" style="left:110px;top:262px;width:157px">Add Random Object</div><div class="btn b3" style="left:10px;top:294px;width:108px">Edit Brushes</div><div class="btn b3" style="left:122px;top:294px;width:133px">Open Tile Folder</div></div><div class="card" style="top:588px;height:85px"><div class="h" style="top:12px">ACTIVE TILE OBJECTS</div><div class="inp" style="top:34px">(none)</div></div><div style="position:absolute;left:1041px;top:72px;width:339px;height:716px;overflow:hidden;border-radius:0 0 11px 11px"><div class="card" style="left:12px;top:613px;height:200px"><div class="h" style="top:12px">WORLD STATUS</div><div class="t" style="top:37px">Status: <b style="color:#eef0fa">connected</b></div><div class="t" style="top:58px">Tiles: <b style="color:#eef0fa">170</b></div><div class="t" style="top:79px">Objects: <b style="color:#eef0fa">3181</b></div></div></div><div class="sb"></div></body></html>
